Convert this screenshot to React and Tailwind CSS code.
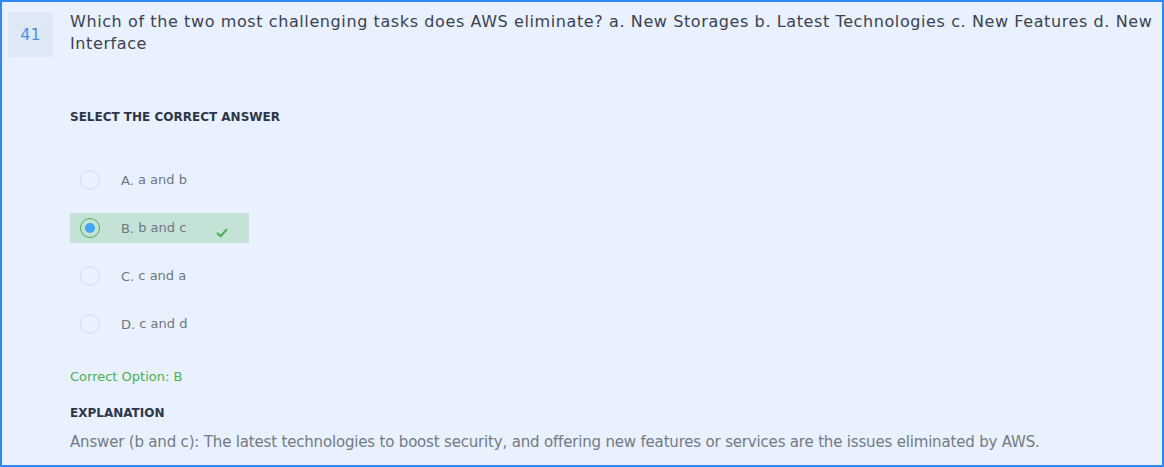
import React from "react";

// Quiz question card
const options = [
    { key: "A", text: "a and b" },
    { key: "B", text: "b and c", selected: true },
    { key: "C", text: "c and a" },
    { key: "D", text: "c and d" },
];

const Radio = ({ selected }) =>
    selected ? (
        <div className="h-5 w-5 rounded-full border border-[#4caf50] flex items-center justify-center">
            <div className="h-[10px] w-[10px] rounded-full bg-[#42a5f5]" />
        </div>
    ) : (
        <div className="h-5 w-5 rounded-full border border-[#d3dbe4]" />
    );

const Check = () => (
    <svg width="12" height="10" viewBox="0 0 12 10" className="ml-[30px] mt-[9px]">
        <path d="M1.5 5.2 L4.6 8.2 L10.5 1.8" fill="none" stroke="#4caf50" strokeWidth="2" strokeLinecap="round" strokeLinejoin="round" />
    </svg>
);

export default function App() {
    return (
        <div
            className="w-[1164px] h-[467px] border-2 border-[#2f89f4] bg-[#e8f1fd] flex"
            style={{ fontFamily: "'DejaVu Sans', 'Liberation Sans', sans-serif" }}
        >
            {/* number */}
            <div className="ml-[6px] mt-[10px] h-[45px] w-[45px] shrink-0 bg-[#dfe9f6] flex items-center justify-center text-[16px] text-[#4a90e2]">
                41
            </div>

            <div className="ml-[17px] pt-[9px] pr-[6px] flex-1">
                <p className="text-[16px] leading-[22px] tracking-[0.6px] text-[#3c4250]">
                    Which of the two most challenging tasks does AWS eliminate? a. New Storages b. Latest Technologies c. New Features d. New Interface
                </p>

                <div className="mt-[54px] text-[12px] leading-4 font-bold text-[#2c3648]">
                    SELECT THE CORRECT ANSWER
                </div>

                <div className="mt-10 flex flex-col gap-[18px]">
                    {options.map((o) => (
                        <div
                            key={o.key}
                            className={
                                "h-[30px] w-[179px] pl-[10px] flex items-center " +
                                (o.selected ? "bg-[#c4e2d6]" : "")
                            }
                        >
                            <Radio selected={o.selected} />
                            <span className="ml-[21px] text-[13px] text-[#6e7783]">
                                <span className="relative top-[1px]">{o.key}.</span> {o.text}
                            </span>
                            {o.selected && <Check />}
                        </div>
                    ))}
                </div>

                <div className="mt-[30px] text-[13px] leading-4 text-[#4caf50]">
                    Correct Option: B
                </div>

                <div className="mt-[20px] text-[12px] leading-4 font-bold text-[#2c3648]">
                    EXPLANATION
                </div>

                <p className="mt-[11px] text-[15px] leading-[20px] tracking-[-0.18px] text-[#737a85]">
                    Answer (b and c): The latest technologies to boost security, and offering new features or services are the issues eliminated by AWS.
                </p>
            </div>
        </div>
    );
}
